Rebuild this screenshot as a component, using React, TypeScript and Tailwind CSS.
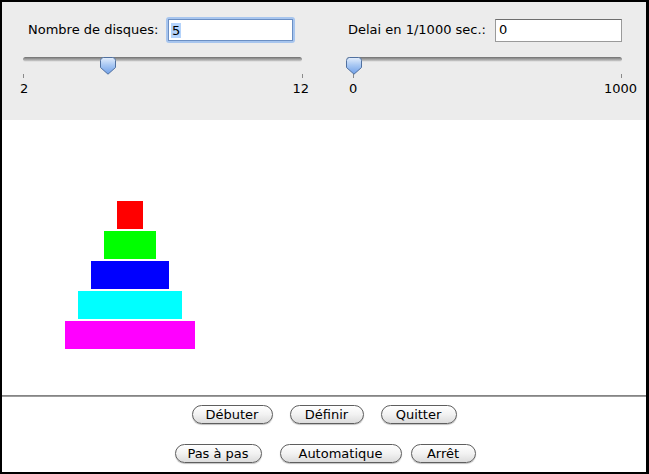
import React from 'react';

const font = { fontFamily: '"DejaVu Sans", "Liberation Sans", sans-serif' };

// aqua style slider knob
const Thumb: React.FC = () => (
  <svg width="16" height="18" viewBox="0 0 16 18">
    <defs>
      <linearGradient id="knob" x1="0" y1="0" x2="0" y2="1">
        <stop offset="0" stopColor="#e4eefc" />
        <stop offset="0.45" stopColor="#a9c8f3" />
        <stop offset="1" stopColor="#6f9fe8" />
      </linearGradient>
    </defs>
    <path
      d="M3.5 0.5 H12.5 Q15.5 0.5 15.5 3.5 V10.5 L8 17.2 L0.5 10.5 V3.5 Q0.5 0.5 3.5 0.5 Z"
      fill="url(#knob)"
      stroke="#50709f"
    />
  </svg>
);

const Track: React.FC<{ width: number; thumbLeft: number }> = ({ width, thumbLeft }) => (
  <div className="relative h-[18px]" style={{ width }}>
    <div className="mt-[5px] h-[5px] rounded-full bg-gradient-to-b from-[#6f6f6f] via-[#9c9c9c] to-[#c9c9c9] border-b border-[#e0e0e0]" />
    <div className="absolute top-0" style={{ left: thumbLeft }}>
      <Thumb />
    </div>
  </div>
);

const AquaButton: React.FC<{ label: string; width: string }> = ({ label, width }) => (
  <button
    className={`${width} h-[19px] rounded-full border border-[#5e5e5e] bg-gradient-to-b from-white via-[#f2f2f2] to-[#dcdcdc] text-[13px] leading-none text-black shadow-[0_1px_1px_rgba(0,0,0,0.25)]`}
    style={font}
  >
    {label}
  </button>
);

const disks = [
  { w: 'w-[26px]', c: 'bg-[#ff0000]' },
  { w: 'w-[52px]', c: 'bg-[#00ff00]' },
  { w: 'w-[78px]', c: 'bg-[#0000ff]' },
  { w: 'w-[104px]', c: 'bg-[#00ffff]' },
  { w: 'w-[130px]', c: 'bg-[#ff00ff]' },
];

export default function App() {
  return (
    <div
      className="w-[649px] h-[474px] bg-black pl-[2px] pt-[2px] pr-[3px] pb-[2px] overflow-hidden"
      style={font}
    >
      <div className="flex flex-col h-full bg-white">
        {/* controls */}
        <div className="h-[118px] bg-[#ececec] flex text-[13px] text-black">
          {/* disks count */}
          <div className="w-[320px] pt-[15px]">
            <div className="flex items-center h-[26px] pl-[26px]">
              <span className="w-[138px]">Nombre de disques:</span>
              <div className="w-[129px] h-[26px] rounded-[3px] bg-[#a7c5ee] p-[2px]">
                <div className="h-full bg-white border border-[#6b8fc4] flex items-center pl-[2px]">
                  <span className="bg-[#b4d3fb] leading-[15px] px-[1px]">5</span>
                </div>
              </div>
            </div>
            <div className="pl-[21px] mt-[14px]">
              <Track width={279} thumbLeft={77} />
            </div>
            <div className="pl-[21px] w-[301px] flex justify-between -mt-[1px]">
              <div className="w-px h-[4px] bg-[#8a8a8a]" />
              <div className="w-px h-[4px] bg-[#8a8a8a]" />
            </div>
            <div className="pl-[18px] w-[307px] flex justify-between mt-[4px] leading-none">
              <span>2</span>
              <span>12</span>
            </div>
          </div>
          {/* delay */}
          <div className="flex-1 pt-[15px]">
            <div className="flex items-center h-[26px] pl-[26px]">
              <span className="w-[147px]">Delai en 1/1000 sec.:</span>
              <div className="w-[127px] h-[23px] bg-white border border-[#9a9a9a] border-t-[#6e6e6e] flex items-center pl-[3px]">
                0
              </div>
            </div>
            <div className="pl-[25px] mt-[14px]">
              <Track width={275} thumbLeft={-1} />
            </div>
            <div className="pl-[31px] w-[300px] flex justify-between -mt-[1px]">
              <div className="w-px h-[4px] bg-[#8a8a8a]" />
              <div className="w-px h-[4px] bg-[#8a8a8a]" />
            </div>
            <div className="pl-[27px] w-[315px] flex justify-between mt-[4px] leading-none">
              <span>0</span>
              <span>1000</span>
            </div>
          </div>
        </div>

        {/* tower canvas */}
        <div className="h-[275px] bg-white pt-[81px]">
          <div className="w-[130px] ml-[63px] flex flex-col items-center gap-[2px]">
            {disks.map((d, i) => (
              <div key={i} className={`${d.w} ${d.c} h-[28px]`} />
            ))}
          </div>
        </div>

        <div className="h-[2px] bg-gradient-to-b from-[#7a7a7a] to-[#a8a8a8]" />

        {/* buttons */}
        <div className="flex-1 bg-white flex flex-col items-center pt-[8px]">
          <div className="flex gap-[17px]">
            <AquaButton label="Débuter" width="w-[81px]" />
            <AquaButton label="Définir" width="w-[74px]" />
            <AquaButton label="Quitter" width="w-[76px]" />
          </div>
          <div className="flex mt-[20px] ml-[2px]">
            <AquaButton label="Pas à pas" width="w-[87px]" />
            <div className="w-[18px]" />
            <AquaButton label="Automatique" width="w-[122px]" />
            <div className="w-[9px]" />
            <AquaButton label="Arrêt" width="w-[65px]" />
          </div>
        </div>
      </div>
    </div>
  );
}
